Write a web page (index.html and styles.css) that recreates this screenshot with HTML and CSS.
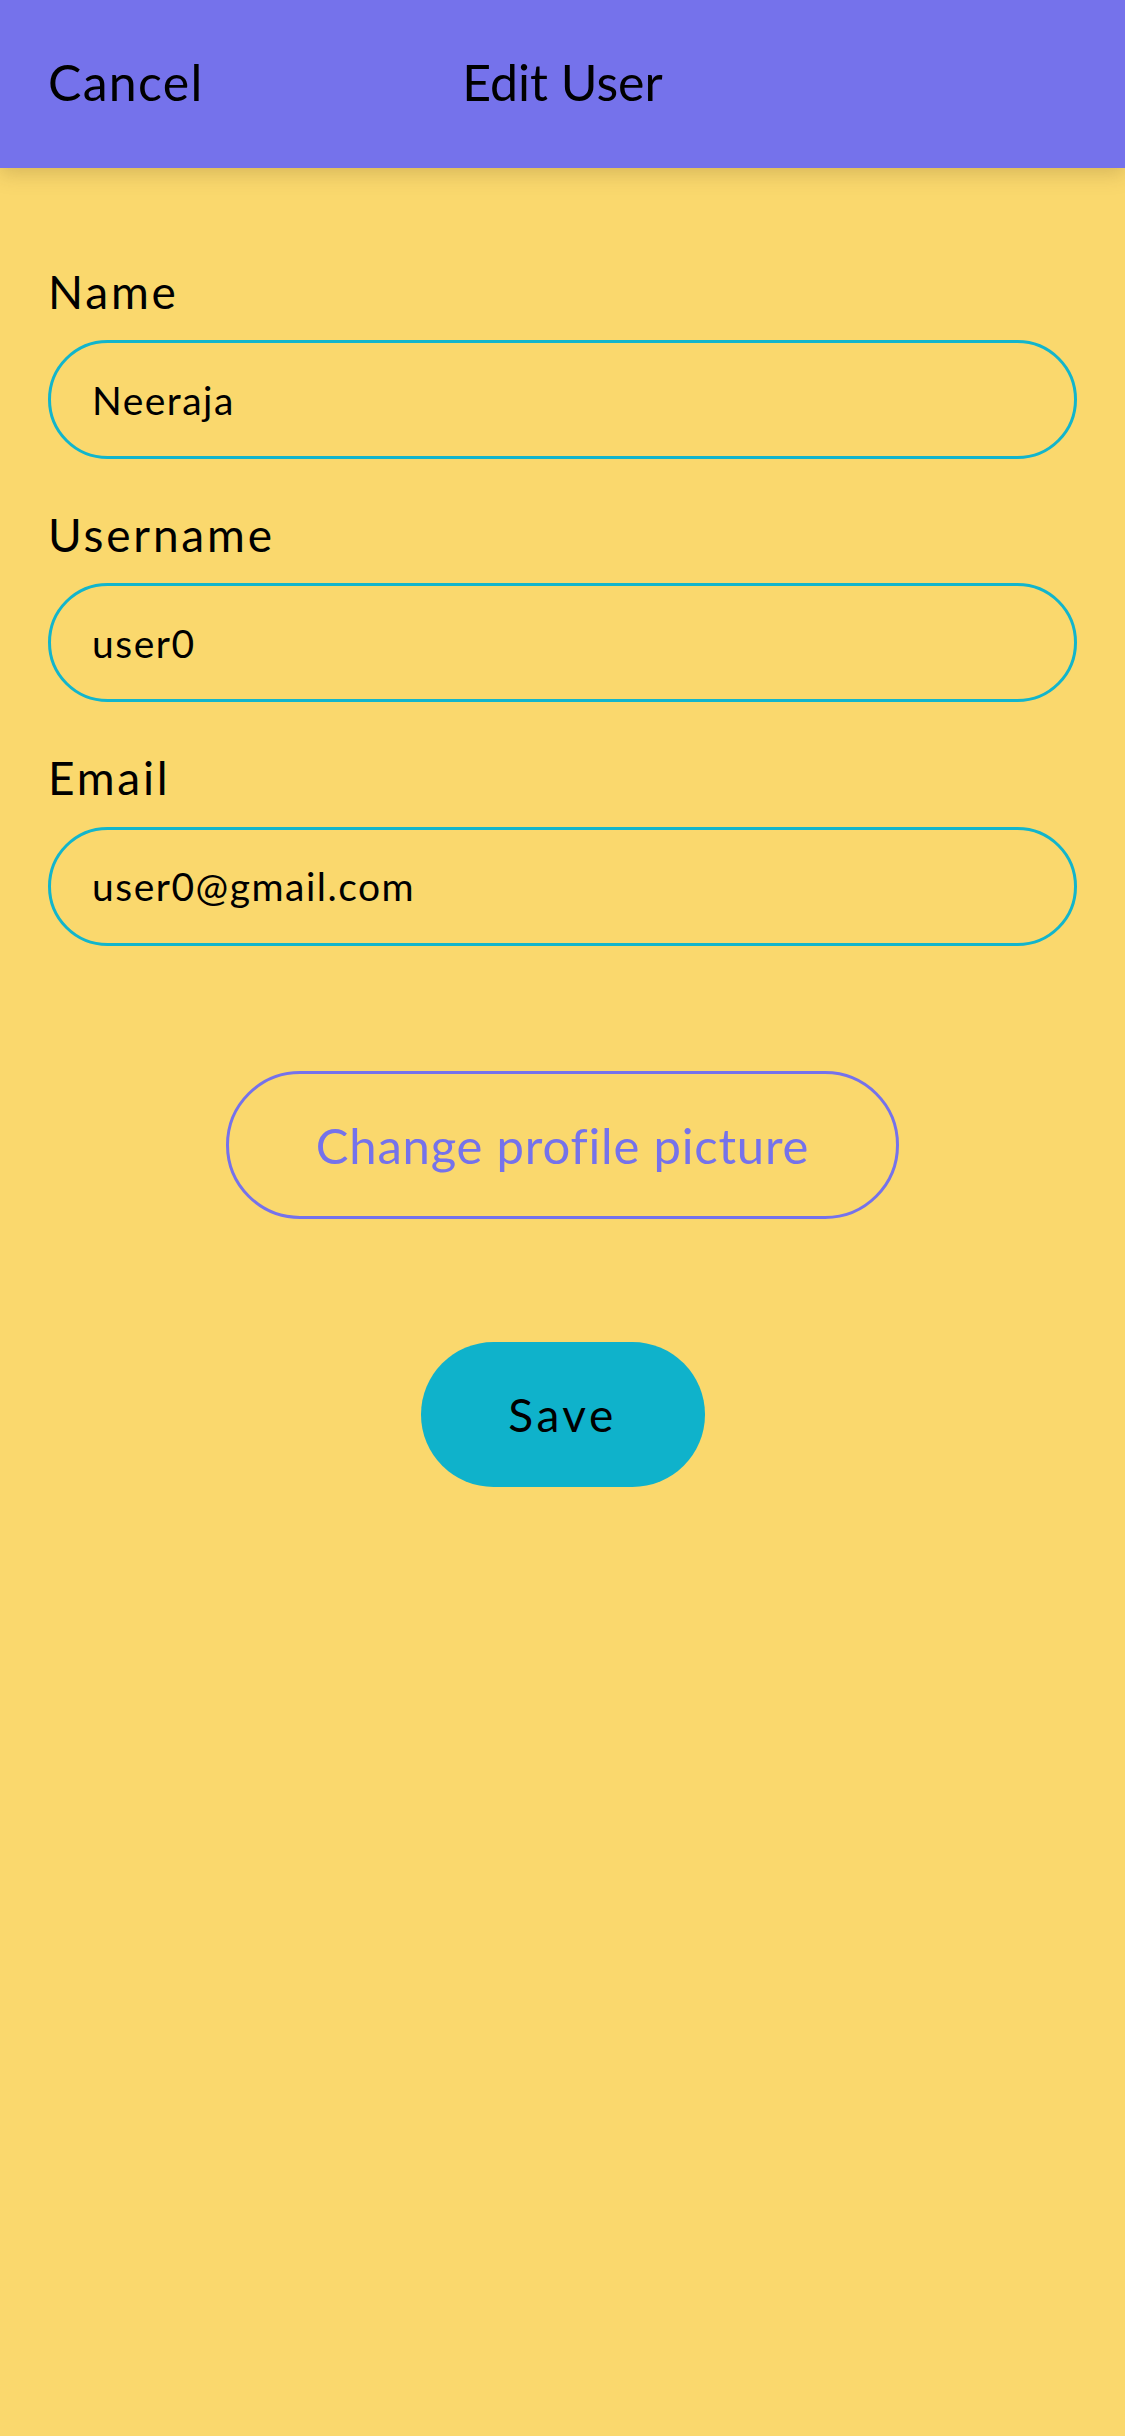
FILE: index.html
```html
<!DOCTYPE html>
<html lang="en">
<head>
<meta charset="utf-8">
<title>Edit User</title>
<link rel="stylesheet" href="styles.css">
</head>
<body>
<header class="topbar">
  <span class="topbar-cancel">Cancel</span>
  <span class="topbar-title">Edit User</span>
  <span class="topbar-spacer"></span>
</header>
<main class="form">
  <div class="fields">
    <div class="field">
      <label class="field-label">Name</label>
      <div class="field-input">Neeraja</div>
    </div>
    <div class="field">
      <label class="field-label">Username</label>
      <div class="field-input">user0</div>
    </div>
    <div class="field">
      <label class="field-label">Email</label>
      <div class="field-input">user0@gmail.com</div>
    </div>
  </div>
  <div class="actions">
    <button class="btn-outline">Change profile picture</button>
    <button class="btn-save">Save</button>
  </div>
</main>
</body>
</html>
```

FILE: styles.css
```css
* { box-sizing: border-box; }
html, body {
  margin: 0;
  padding: 0;
}
body {
  background: #fad86d;
  font-family: Lato, "Open Sans", sans-serif;
  color: #000;
  min-height: 2436px;
}
.topbar {
  height: 168px;
  background: #7572eb;
  display: grid;
  grid-template-columns: 1fr auto 1fr;
  align-items: center;
  padding: 0 48px;
  box-shadow: 0 6px 18px rgba(120, 90, 40, 0.25);
  position: relative;
  z-index: 1;
}
.topbar-cancel, .topbar-title {
  font-size: 50px;
  line-height: 1.2;
  padding-bottom: 4px;
}
.topbar-cancel { letter-spacing: 1.3px; }
.form {
  padding: 96px 48px 0;
  display: flex;
  flex-direction: column;
}
.fields {
  display: flex;
  flex-direction: column;
  gap: 48px;
}
.field {
  display: flex;
  flex-direction: column;
  gap: 21px;
}
.field-label {
  font-size: 46px;
  line-height: 1.2;
  letter-spacing: 2.8px;
}
.field-input {
  height: 119px;
  border: 3px solid #12b5cc;
  border-radius: 60px;
  display: flex;
  align-items: center;
  padding-left: 41px;
  font-size: 39px;
  letter-spacing: 1.5px;
}
.actions {
  display: flex;
  flex-direction: column;
  align-items: center;
  gap: 123px;
  margin-top: 125px;
}
.btn-outline {
  width: 673px;
  height: 148px;
  border: 3px solid #7572eb;
  border-radius: 74px;
  background: transparent;
  color: #7572eb;
  font-family: Lato, "Open Sans", sans-serif;
  font-size: 49px;
  letter-spacing: 0.8px;
  padding: 0;
}
.btn-save {
  width: 284px;
  height: 145px;
  border: none;
  border-radius: 73px;
  background: #0fb2cb;
  color: #000;
  font-family: Lato, "Open Sans", sans-serif;
  font-size: 46px;
  letter-spacing: 3.5px;
  padding: 0;
}
```
